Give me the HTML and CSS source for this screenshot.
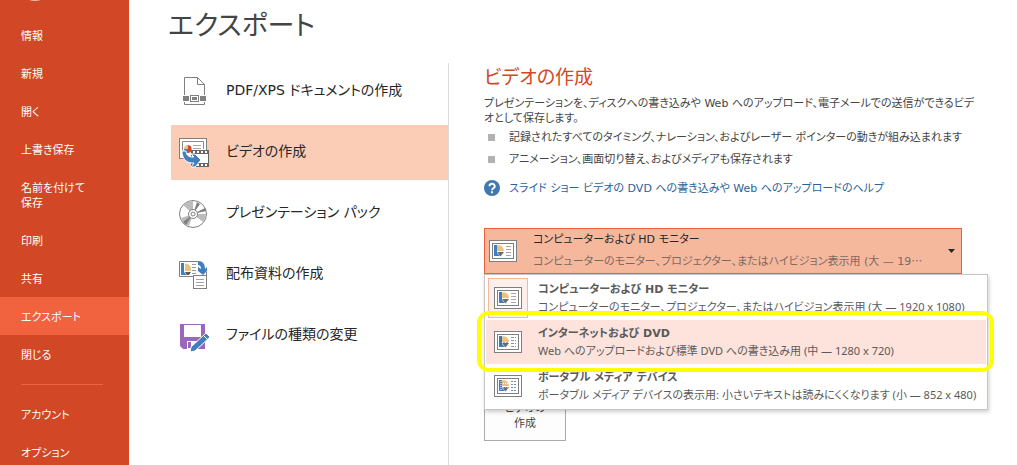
FILE: index.html
```html
<!DOCTYPE html>
<html lang="ja">
<head>
<meta charset="utf-8">
<title>エクスポート</title>
<link rel="stylesheet" href="styles.css">
</head>
<body>
<svg class="defs" width="0" height="0" aria-hidden="true">
  <defs>
    <g id="slide-frame">
      <rect x="0.5" y="0.5" width="27" height="21" fill="#fff" stroke="#7f7f7f"/>
      <rect x="3.5" y="3.5" width="21" height="15" fill="#fff" stroke="#7f7f7f"/>
    </g>
    <g id="slide-chart">
      <path d="M5 5h3v8l3 3H5z" fill="#3f7fbf"/>
      <path d="M8 11V5.500a5.500 5.500 0 0 1 7 5.500z" fill="#edc17f"/>
      <path d="M8 12h7l-3.500 4.500z" fill="#6d6d6d"/>
    </g>
  </defs>
</svg>
<div class="backstage">
  <nav class="sidebar" aria-label="ファイル">
    <button class="back" type="button" aria-label="戻る">
      <svg width="34" height="34" viewBox="0 0 34 34"><circle cx="17" cy="17" r="16" fill="none" stroke="#e3b9ad" stroke-width="2"/></svg>
    </button>
    <button class="side-item" type="button">情報</button>
    <button class="side-item" type="button">新規</button>
    <button class="side-item" type="button">開く</button>
    <button class="side-item" type="button">上書き保存</button>
    <button class="side-item" type="button">名前を付けて<br>保存</button>
    <button class="side-item" type="button">印刷</button>
    <button class="side-item" type="button">共有</button>
    <button class="side-item side-item-active" type="button" aria-current="page">エクスポート</button>
    <button class="side-item" type="button">閉じる</button>
    <hr class="side-rule">
    <button class="side-item" type="button">アカウント</button>
    <button class="side-item" type="button">オプション</button>
  </nav>
  <main class="main">
    <h1 class="title">エクスポート</h1>
    <div class="columns">
      <div class="tasks">
        <button class="task" type="button">
          <svg class="task-icon" width="32" height="32" viewBox="0 0 32 32">
            <path d="M5.500 19V1.500h13l7 7V19M5.500 26v2.500h20V26M18.500 1.500v7h7" fill="none" stroke="#808080"/>
            <path d="M4 20h6v5H4zM21 20h6v5h-6z" fill="#808080"/>
            <rect x="11.500" y="19.500" width="8" height="6" fill="#fff" stroke="#808080"/>
            <rect x="13" y="21" width="5" height="3" fill="#808080"/>
          </svg>
          <span class="task-name">PDF/XPS ドキュメントの作成</span>
        </button>
        <button class="task task-active" type="button" aria-pressed="true">
          <svg class="task-icon" width="32" height="32" viewBox="0 0 32 32">
            <rect x="0.5" y="1.500" width="27" height="20" fill="#fff" stroke="#7f7f7f"/>
            <path d="M3.500 18V4.500h21V12" fill="none" stroke="#8a8a8a"/>
            <path d="M9 8v4H5a4 4 0 0 1 4-4z" fill="#edc17f"/>
            <path d="M9 12V8a4 4 0 1 1-1 8z" fill="#d24726"/>
            <path d="M5 12h4v4a4 4 0 0 1-4-4z" fill="#3f7fbf"/>
            <path d="M14 8.500h8M14 11.500h8" stroke="#a6a6a6"/>
            <rect x="12.500" y="13.500" width="17" height="16" fill="#fff" stroke="#666"/>
            <path d="M12 13h18v4H12zM12 26h18v4H12z" fill="#666"/>
            <path d="M14 15h15M14 28h15" stroke="#fff" stroke-width="2" stroke-dasharray="2 2"/>
            <path d="M3 14h4c0 4 3 6 6 6h2l-3-3h4l6 6-6 7h-4l3-4h-2C7 26 3 21 3 14z" fill="#3f7fbf" stroke="#fff"/>
          </svg>
          <span class="task-name">ビデオの作成</span>
        </button>
        <button class="task" type="button">
          <svg class="task-icon" width="32" height="32" viewBox="0 0 32 32">
            <circle cx="14" cy="16" r="13.500" fill="#fff" stroke="#808080"/>
            <path d="M14 16L4 7a13 13 0 0 1 10-4zM14 16h13a13 13 0 0 1-3 8zM14 16l-4 12a13 13 0 0 1-8-8z" fill="#bcbcbc"/>
            <path d="M14 16l4-12 3 2zM14 16L26 10l1 3zM14 16L4 24l3 3z" fill="#808080"/>
            <circle cx="14" cy="16" r="4.500" fill="#fff" stroke="#808080"/>
            <circle cx="14" cy="16" r="2" fill="#fff" stroke="#808080"/>
          </svg>
          <span class="task-name">プレゼンテーション パック</span>
        </button>
        <button class="task" type="button">
          <svg class="task-icon" width="32" height="32" viewBox="0 0 32 32">
            <path d="M19 2.500H0.500v15h14" fill="#fff" stroke="#7f7f7f"/>
            <path d="M27.500 13v4.500H14" fill="none" stroke="#7f7f7f"/>
            <path d="M2 4h3v9l3 3H2z" fill="#3f7fbf"/>
            <path d="M6 12V4.500a6 6 0 0 1 6 7.500z" fill="#edc17f"/>
            <path d="M6 13h6l-2 3H8z" fill="#595959"/>
            <path d="M13 5.500h4M13 8.500h4M13 11.500h4M13 14.500h4" stroke="#999"/>
            <rect x="14.500" y="16.500" width="13" height="13" fill="#fff" stroke="#7f7f7f"/>
            <path d="M17 20.500h8M17 23.500h8M17 26.500h8" stroke="#a0a0a0"/>
            <path d="M19 2c5 0 7 3 7 8l2-2v4l-4 4-5-4V8l3 2c0-3-1-4-3-4z" fill="#3f7fbf"/>
          </svg>
          <span class="task-name">配布資料の作成</span>
        </button>
        <button class="task" type="button">
          <svg class="task-icon" width="32" height="32" viewBox="0 0 32 32">
            <path d="M1 4h25v25H4l-3-3z" fill="#9a67bd"/>
            <path d="M5 5h17v12H5zM8 21h11v8H8z" fill="#fff"/>
            <path d="M9 22h3v6H9z" fill="#9a67bd"/>
            <path d="M27 13l4 4-15 14-5 1 1-5z" fill="#3f7fbf" stroke="#fff"/>
            <path d="M25 16l3 3" stroke="#fff"/>
          </svg>
          <span class="task-name">ファイルの種類の変更</span>
        </button>
      </div>
      <section class="detail">
        <h2 class="detail-title">ビデオの作成</h2>
        <p class="lead">プレゼンテーションを、ディスクへの書き込みや Web へのアップロード、電子メールでの送信ができるビデ<br>オとして保存します。</p>
        <ul class="points">
          <li>記録されたすべてのタイミング、ナレーション、およびレーザー ポインターの動きが組み込まれます</li>
          <li>アニメーション、画面切り替え、およびメディアも保存されます</li>
        </ul>
        <a class="help" href="#help">
          <svg width="16" height="16" viewBox="0 0 16 16"><circle cx="8" cy="8" r="8" fill="#3f78b2"/><path d="M5.500 6.200a2.600 2.400 0 1 1 3.900 2C8.400 8.800 8 9.200 8 10.200M8 11.300v2" fill="none" stroke="#fff" stroke-width="1.900"/></svg>
          <span>スライド ショー ビデオの DVD への書き込みや Web へのアップロードのヘルプ</span>
        </a>
        <div class="picker">
          <button class="combo" type="button" aria-haspopup="listbox" aria-expanded="true">
            <svg class="combo-icon" width="28" height="22" viewBox="0 0 28 22"><use href="#slide-frame"/><use href="#slide-chart"/><path d="M17 6.500h5M17 9.500h5M17 12.500h5M17 15.500h5" stroke="#a6a6a6"/></svg>
            <span class="combo-text">
              <span class="combo-name">コンピューターおよび HD モニター</span>
              <span class="combo-note">コンピューターのモニター、プロジェクター、またはハイビジョン表示用 (大 — 19<span class="dots">…</span></span>
            </span>
            <svg class="caret" width="7" height="4" viewBox="0 0 7 4"><path d="M0 0h7L3.500 4z" fill="#262626"/></svg>
          </button>
          <ul class="menu" role="listbox" aria-label="ビデオの品質">
            <li class="option" role="option" aria-selected="true">
              <span class="option-icon option-icon-on"><svg width="28" height="22" viewBox="0 0 28 22"><use href="#slide-frame"/><use href="#slide-chart"/><path d="M17 6.500h5M17 9.500h5M17 12.500h5M17 15.500h5" stroke="#a6a6a6"/></svg></span>
              <span class="option-text"><b>コンピューターおよび HD モニター</b><span class="option-note">コンピューターのモニター、プロジェクター、またはハイビジョン表示用 (大 — 1920 x 1080)</span></span>
            </li>
            <li class="option option-hover" role="option" aria-selected="false">
              <span class="option-icon"><svg width="28" height="22" viewBox="0 0 28 22"><use href="#slide-frame"/><use href="#slide-chart"/><path d="M17 6.500h5M17 9.500h5M17 12.500h5M17 15.500h5" stroke="#8f8f8f" stroke-dasharray="3 1"/><path d="M7 6v9M9 12h6" stroke="#2f5f8f" stroke-dasharray="2 1"/></svg></span>
              <span class="option-text"><b>インターネットおよび DVD</b><span class="option-note">Web へのアップロードおよび標準 DVD への書き込み用 (中 — 1280 x 720)</span></span>
              <span class="callout"></span>
            </li>
            <li class="option" role="option" aria-selected="false">
              <span class="option-icon"><svg width="28" height="22" viewBox="0 0 28 22"><use href="#slide-frame"/><use href="#slide-chart"/><path d="M17 6.500h5M17 9.500h5M17 12.500h5M17 15.500h5" stroke="#6f8fa8" stroke-dasharray="2 1"/><path d="M9 8.500h6M7 6v9M9 12h6" stroke="#fff" stroke-dasharray="1 1"/></svg></span>
              <span class="option-text"><b>ポータブル メディア デバイス</b><span class="option-note">ポータブル メディア デバイスの表示用: 小さいテキストは読みにくくなります (小 — 852 x 480)</span></span>
            </li>
          </ul>
        </div>
        <button class="create" type="button">ビデオの<br>作成</button>
      </section>
    </div>
  </main>
</div>
</body>
</html>
```

FILE: styles.css
```css
* { box-sizing: border-box; }

body {
  margin: 0;
  background: #fff;
  color: #444;
  font: 11px/15px "DejaVu Sans", "Noto Sans CJK JP", sans-serif;
  font-feature-settings: "palt";
}

button {
  margin: 0;
  padding: 0;
  border: 0;
  background: none;
  color: inherit;
  font: inherit;
  font-feature-settings: inherit;
  text-align: left;
}

h1, h2, p, ul { margin: 0; padding: 0; font-weight: 400; }
ul { list-style: none; }
svg { display: block; flex: none; }
.defs { position: absolute; }

.backstage {
  display: flex;
  height: 100vh;
  overflow: hidden;
}

.sidebar {
  display: flex;
  flex: none;
  flex-direction: column;
  width: 129px;
  background: #d24726;
  color: #fff;
}

.back {
  flex: none;
  margin: -33px 0 15px 18px;
}

.side-item {
  flex: none;
  min-height: 38px;
  padding: 13px 21px 10px;
  white-space: nowrap;
}

.side-item-active { background: #f1623e; }

.side-rule {
  flex: none;
  width: 82px;
  height: 1px;
  margin: 11px 21px 10px;
  border: 0;
  background: #f1623e;
}

.main {
  display: flex;
  flex: 1;
  flex-direction: column;
  min-width: 0;
  padding-left: 39px;
}

.title {
  padding: 6px 0 17px;
  font-size: 27px;
  line-height: 40px;
}

.columns {
  display: flex;
  flex: 1;
}

.tasks {
  display: flex;
  flex: none;
  flex-direction: column;
  gap: 6px;
  width: 281px;
  padding: 1px 0 0 3px;
  border-right: 1px solid #dcdcdc;
}

.task {
  display: flex;
  align-items: center;
  gap: 15px;
  height: 55px;
  padding: 0 8px;
  color: #262626;
  font-size: 14px;
  line-height: 20px;
  white-space: nowrap;
}

.task-active { background: #fbccb6; }
.task-name { padding-bottom: 4px; }

.detail {
  flex: 1;
  min-width: 0;
  padding: 0 29px 0 35px;
}

.detail-title {
  padding-bottom: 5px;
  color: #d24726;
  font-size: 19px;
  line-height: 28px;
}

.lead { white-space: nowrap; }

.points li {
  display: flex;
  align-items: center;
  height: 22px;
  white-space: nowrap;
}

.points li::before {
  content: "";
  flex: none;
  width: 7px;
  height: 7px;
  margin: 0 14px 0 4px;
  background: #b2b2b2;
}

.help {
  display: flex;
  align-items: center;
  gap: 9px;
  padding: 10px 0 32px;
  color: #2b6299;
  text-decoration: none;
  white-space: nowrap;
}

.picker { position: relative; }

.combo {
  display: flex;
  align-items: center;
  width: calc(100% - 26px);
  height: 46px;
  padding: 0 6px 0 4px;
  border: 1px solid #ed623c;
  background: #f5b89d;
}

.combo-text {
  display: flex;
  flex: 1;
  flex-direction: column;
  gap: 2px;
  min-width: 0;
  margin-left: 16px;
  line-height: 20px;
  white-space: nowrap;
}

.combo-name { color: #262626; }
.combo-note { color: #7a6a64; }

.dots {
  font-family: "Noto Sans CJK JP", sans-serif;
  line-height: 1;
}

.menu {
  position: absolute;
  z-index: 1;
  top: 46px;
  left: 0;
  width: 100%;
  padding: 1px;
  border: 1px solid #c6c6c6;
  background: #fff;
  box-shadow: 1px 2px 4px rgba(0, 0, 0, 0.2);
  color: #5a5a5a;
}

.option {
  position: relative;
  display: flex;
  align-items: center;
  height: 44px;
}

.option-hover { background: #fde3db; }

.option-icon {
  display: flex;
  flex: none;
  align-items: center;
  justify-content: center;
  width: 40px;
  height: 40px;
  margin: 0 10px 0 2px;
  border: 1px solid transparent;
}

.option-icon-on {
  border-color: #f5b89d;
  background: #fdf0ec;
}

.option-text {
  display: flex;
  flex-direction: column;
  gap: 2px;
  white-space: nowrap;
}

.option-note { font-family: "Noto Sans", "Noto Sans CJK JP", sans-serif; }

.callout {
  position: absolute;
  z-index: 2;
  inset: -9px -8px -8px -9px;
  border: 4px solid #ff0;
  border-radius: 12px;
}

.create {
  display: flex;
  align-items: flex-end;
  justify-content: center;
  width: 82px;
  height: 80px;
  margin-top: 87px;
  padding-bottom: 9px;
  border: 1px solid #ababab;
  background: #fdfdfd;
  text-align: center;
}
```
